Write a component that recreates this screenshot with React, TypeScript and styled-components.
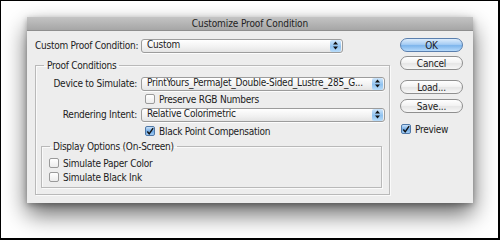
import React from 'react';
import styled, { createGlobalStyle } from 'styled-components';

const GlobalStyle = createGlobalStyle`
  html, body {
    margin: 0;
    padding: 0;
    background: #fff;
  }
  body {
    font-family: "DejaVu Sans Condensed", "DejaVu Sans", sans-serif;
    font-size: 10px;
    color: #1c1c1c;
  }
`;

const Frame = styled.div`
  box-sizing: border-box;
  width: 500px;
  height: 240px;
  border-style: solid;
  border-color: #000;
  border-width: 1px 2px 2px 1px;
  background: #fff;
  padding: 16px 0 0 26px;
  overflow: hidden;
`;

const Dialog = styled.div`
  width: 446px;
  height: 186px;
  background: #ededed;
  display: flex;
  flex-direction: column;
  box-shadow: 0 11px 22px rgba(0, 0, 0, 0.6), 0 2px 6px rgba(0, 0, 0, 0.3);
`;

const TitleBar = styled.div`
  height: 14px;
  flex: none;
  display: flex;
  align-items: center;
  justify-content: center;
  background: linear-gradient(#c4c4c4, #a6a6a6);
  border-bottom: 1px solid #8e8e8e;
  box-sizing: border-box;
  color: #222;
  letter-spacing: -0.1px;
`;

const Body = styled.div`
  flex: 1;
  display: flex;
  gap: 10px;
  padding: 7px 10px 0 8px;
`;

const LeftCol = styled.div`
  width: 355px;
  display: flex;
  flex-direction: column;
`;

const RightCol = styled.div`
  width: 63px;
  display: flex;
  flex-direction: column;
`;

const Row = styled.div<{ $h?: number }>`
  display: flex;
  align-items: center;
  height: ${p => p.$h ?? 15}px;
`;

const Label = styled.span<{ $w: number }>`
  width: ${p => p.$w}px;
  text-align: right;
  padding-right: 4px;
  box-sizing: border-box;
  letter-spacing: -0.25px;
  white-space: nowrap;
`;

const SelectBox = styled.div<{ $w: number }>`
  width: ${p => p.$w}px;
  height: 14px;
  box-sizing: border-box;
  border: 1px solid #9c9c9c;
  border-radius: 3px;
  background: linear-gradient(#ffffff, #f1f1f1 60%, #e4e4e4);
  display: flex;
  align-items: center;
  padding-left: 5px;
  letter-spacing: -0.25px;
  white-space: nowrap;
  box-shadow: 0 1px 0 rgba(255, 255, 255, 0.8);
`;

const SelectText = styled.span`
  flex: 1;
  line-height: 12px;
  padding-bottom: 1px;
`;

const ArrowBox = styled.div`
  width: 11px;
  height: 12px;
  flex: none;
  margin-right: 1px;
  border-radius: 2px;
  background: linear-gradient(#cfe6fb, #8fc2f0 55%, #b9dcf9);
  display: flex;
  align-items: center;
  justify-content: center;
`;

const Group = styled.fieldset<{ $inner?: boolean }>`
  margin: ${p => (p.$inner ? '0 7px 0 5px' : '0')};
  padding: 0 0 ${p => (p.$inner ? 3 : 6)}px 0;
  border: 1px solid #b9b9b9;
  box-shadow: 1px 1px 0 #fafafa, inset 1px 1px 0 #fafafa;
  min-width: 0;
`;

const Legend = styled.legend`
  margin-left: 8px;
  padding: 0 3px;
  height: 13px;
  line-height: 13px;
  letter-spacing: -0.25px;
`;

const CheckRow = styled.label<{ $indent: number; $h?: number }>`
  display: flex;
  align-items: center;
  gap: 4px;
  height: ${p => p.$h ?? 14}px;
  padding-left: ${p => p.$indent}px;
  letter-spacing: -0.25px;
  white-space: nowrap;
`;

const Box = styled.span<{ $on?: boolean }>`
  width: 10px;
  height: 10px;
  box-sizing: border-box;
  border-radius: 2px;
  border: 1px solid ${p => (p.$on ? '#4f78a8' : '#9a9a9a')};
  background: ${p =>
    p.$on ? 'linear-gradient(#c9e2fa, #6fa9e4 55%, #a3cdf5)' : 'linear-gradient(#fff, #ececec)'};
  display: flex;
  align-items: center;
  justify-content: center;
  flex: none;
`;

const Button = styled.div<{ $primary?: boolean }>`
  height: 14px;
  box-sizing: border-box;
  border-radius: 7px;
  border: 1px solid ${p => (p.$primary ? '#5a7fae' : '#8f8f8f')};
  background: ${p =>
    p.$primary
      ? 'linear-gradient(#dcecfc, #a6cdf4 45%, #7db5ec 55%, #b6dafb)'
      : 'linear-gradient(#ffffff, #f3f3f3 45%, #e6e6e6 55%, #f7f7f7)'};
  display: flex;
  align-items: center;
  justify-content: center;
  letter-spacing: -0.2px;
  margin-bottom: ${p => (p.$primary ? 4 : 5)}px;
`;

const Spacer = styled.div<{ $h: number }>`
  height: ${p => p.$h}px;
  flex: none;
`;

const Arrows = () => (
  <svg width="7" height="9" viewBox="0 0 7 9">
    <path d="M3.5 0.5 L6 3.5 L1 3.5 Z" fill="#111" />
    <path d="M3.5 8.5 L6 5.5 L1 5.5 Z" fill="#111" />
  </svg>
);

const Tick = () => (
  <svg width="9" height="9" viewBox="0 0 9 9">
    <path d="M1.5 4.5 L3.6 7.2 L8 0.8" stroke="#111" strokeWidth="1.6" fill="none" />
  </svg>
);

const Select: React.FC<{ w: number; value: string }> = ({ w, value }) => (
  <SelectBox $w={w}>
    <SelectText>{value}</SelectText>
    <ArrowBox>
      <Arrows />
    </ArrowBox>
  </SelectBox>
);

const Check: React.FC<{ on?: boolean; text: string; indent: number; h?: number }> = ({ on, text, indent, h }) => (
  <CheckRow $indent={indent} $h={h}>
    <Box $on={on}>{on && <Tick />}</Box>
    <span>{text}</span>
  </CheckRow>
);

export default function App() {
  return (
    <>
      <GlobalStyle />
      <Frame>
        <Dialog>
          <TitleBar>Customize Proof Condition</TitleBar>
          <Body>
            <LeftCol>
              <Row>
                <Label $w={106}>Custom Proof Condition:</Label>
                <Select w={202} value="Custom" />
              </Row>
              <Spacer $h={6} />
              <Group>
                <Legend>Proof Conditions</Legend>
                <Spacer $h={4} />
                <Row>
                  <Label $w={105}>Device to Simulate:</Label>
                  <Select w={244} value="PrintYours_PermaJet_Double-Sided_Lustre_285_G..." />
                </Row>
                <Check text="Preserve RGB Numbers" indent={109} h={16} />
                <Row>
                  <Label $w={105}>Rendering Intent:</Label>
                  <Select w={244} value="Relative Colorimetric" />
                </Row>
                <Check on text="Black Point Compensation" indent={109} h={18} />
                <Group $inner>
                  <Legend>Display Options (On-Screen)</Legend>
                  <Spacer $h={3} />
                  <Check text="Simulate Paper Color" indent={7} />
                  <Check text="Simulate Black Ink" indent={7} />
                </Group>
              </Group>
            </LeftCol>
            <RightCol>
              <Button $primary>OK</Button>
              <Button>Cancel</Button>
              <Spacer $h={5} />
              <Button>Load...</Button>
              <Button>Save...</Button>
              <Spacer $h={4} />
              <Check on text="Preview" indent={1} />
            </RightCol>
          </Body>
        </Dialog>
      </Frame>
    </>
  );
}
